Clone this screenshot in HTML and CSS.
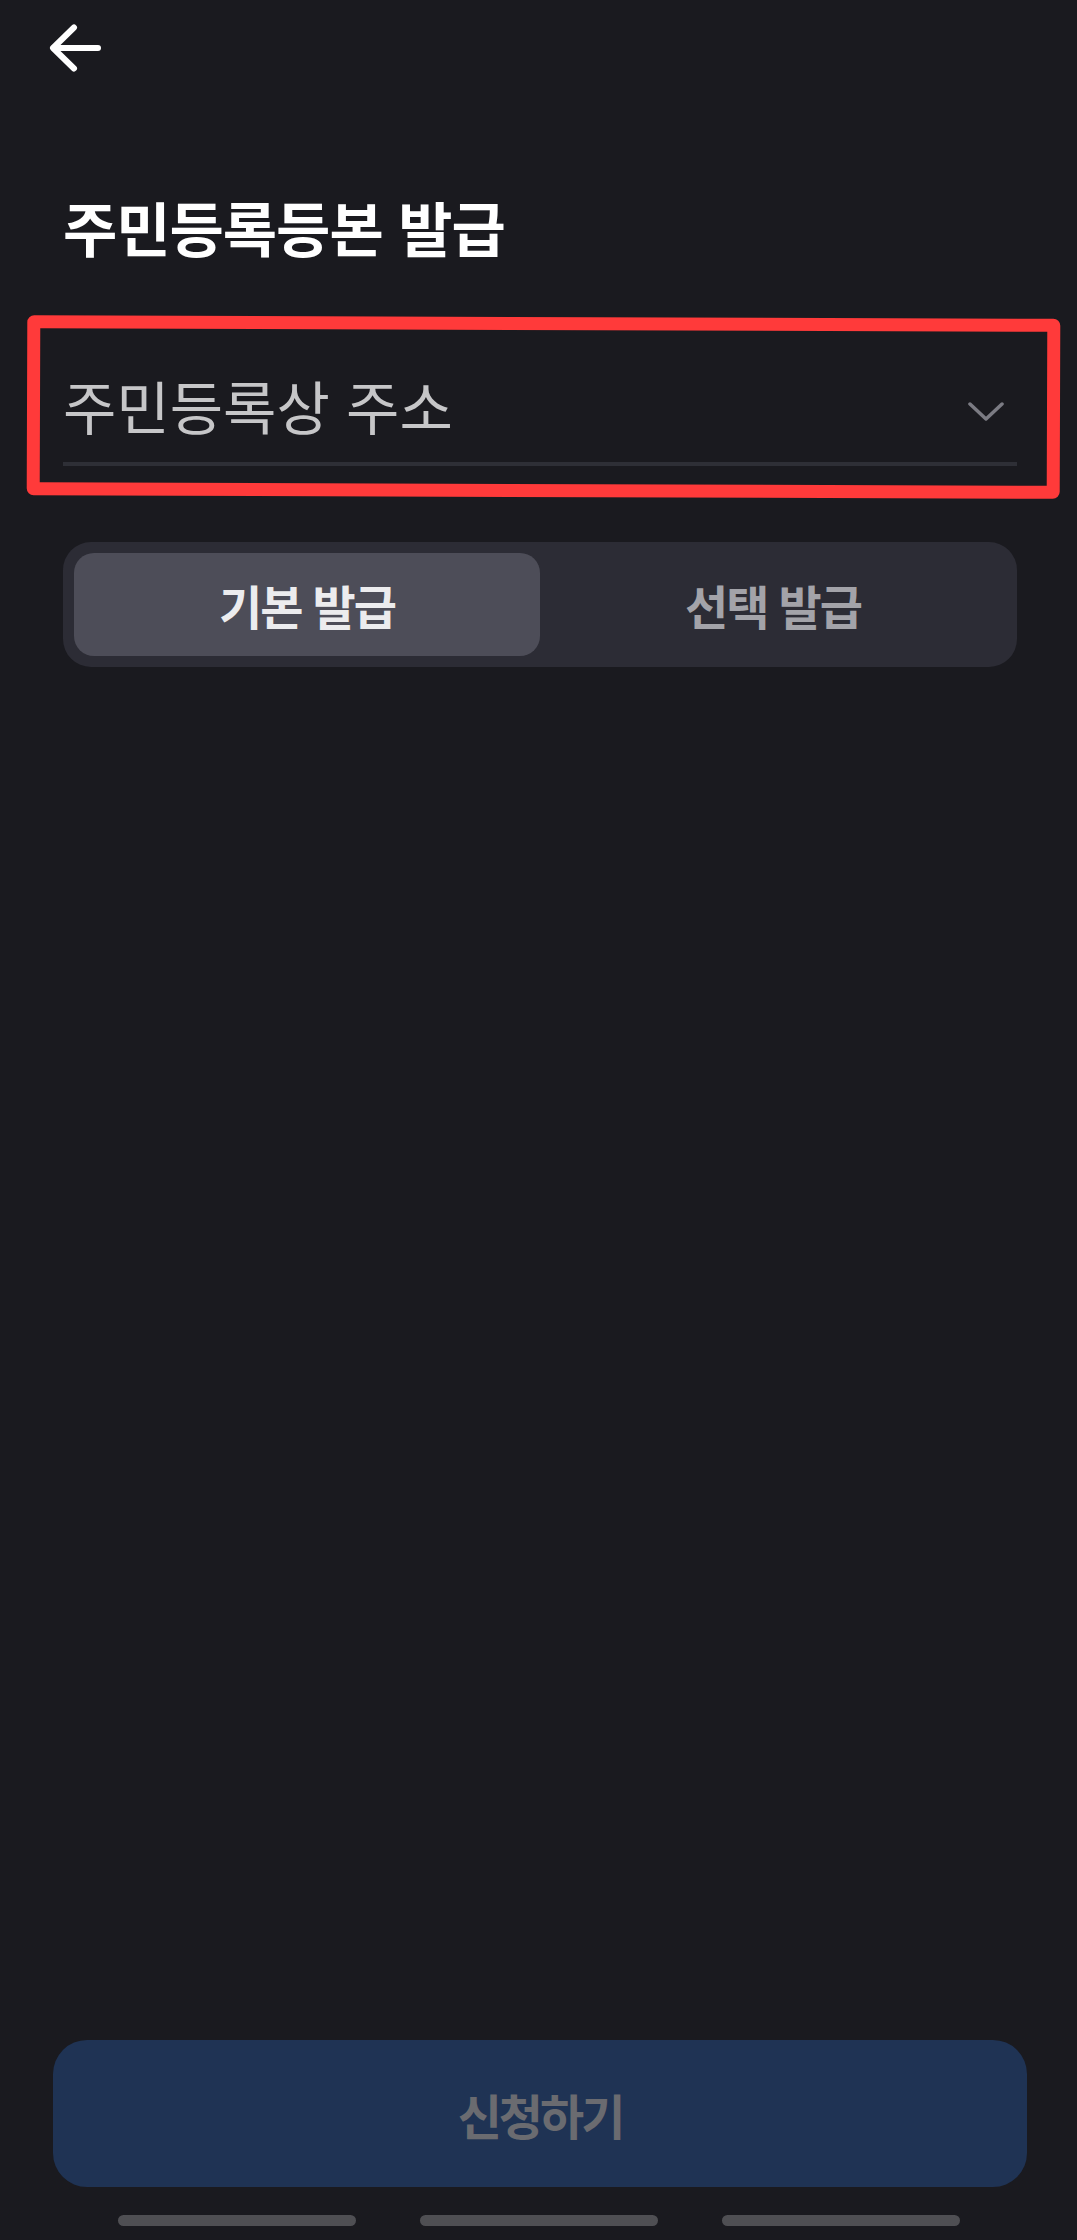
FILE: index.html
```html
<!DOCTYPE html>
<html lang="ko">
<head>
<meta charset="utf-8">
<title>주민등록등본 발급</title>
<link rel="stylesheet" href="styles.css">
</head>
<body>
<div class="screen">
  <header class="topbar">
    <button class="back" aria-label="뒤로">
      <svg width="60" height="56" viewBox="0 0 60 56" fill="none" stroke="#ffffff" stroke-width="6" stroke-linecap="round" stroke-linejoin="round">
        <path d="M52 24 H8"/>
        <path d="M28 3.5 L7 24 L28 44.5"/>
      </svg>
    </button>
  </header>

  <h1 class="title">주민등록등본 발급</h1>

  <div class="field-wrap">
    <div class="field">
      <span class="placeholder">주민등록상 주소</span>
      <svg class="chevron" width="36" height="22" viewBox="0 0 36 22" fill="none" stroke="#7b7b83" stroke-width="3.5" stroke-linecap="round" stroke-linejoin="round">
        <path d="M2 3 L18 18 L34 3"/>
      </svg>
    </div>
    <div class="annotation"></div>
  </div>

  <div class="segmented">
    <button class="seg seg-active">기본 발급</button>
    <button class="seg">선택 발급</button>
  </div>

  <footer class="footer">
    <button class="submit">신청하기</button>
    <nav class="navbar">
      <span class="pill"></span>
      <span class="pill"></span>
      <span class="pill"></span>
    </nav>
  </footer>
</div>
</body>
</html>
```

FILE: styles.css
```css
* { box-sizing: border-box; }

html, body {
  margin: 0;
  padding: 0;
  background: #1a1a1f;
}

body {
  font-family: "Noto Sans CJK KR", "Noto Sans", sans-serif;
  color: #ffffff;
}

.screen {
  width: 1077px;
  height: 2240px;
  display: flex;
  flex-direction: column;
  background: #1a1a1f;
}

.topbar {
  height: 96px;
  display: flex;
  align-items: center;
  padding-left: 46px;
  padding-top: 8px;
}

.back {
  background: none;
  border: 0;
  padding: 0;
  display: flex;
  width: 60px;
  height: 56px;
}

.title {
  margin: 94px 0 0 0;
  padding-left: 63px;
  font-size: 59px;
  font-weight: 700;
  line-height: 74px;
  letter-spacing: -1px;
  color: #ffffff;
}

.field-wrap {
  position: relative;
  margin: 58px 60px 0 63px;
}

.field {
  display: flex;
  align-items: center;
  justify-content: space-between;
  padding-top: 48px;
  padding-bottom: 22px;
  border-bottom: 4px solid #2e2f36;
}

.placeholder {
  font-size: 58px;
  font-weight: 400;
  line-height: 70px;
  color: #c6c6c8;
  letter-spacing: 0;
}

.chevron {
  margin-right: 13px;
  margin-top: 14px;
}

.annotation {
  position: absolute;
  left: -36px;
  right: -43px;
  top: -5px;
  bottom: -31px;
  border: 13px solid #ff3a3a;
  border-radius: 7px;
  pointer-events: none;
  transform: rotate(0.2deg);
}

.segmented {
  margin: 76px 60px 0 63px;
  display: flex;
  padding: 11px;
  background: #2c2c35;
  border-radius: 28px;
  height: 125px;
}

.seg {
  flex: 1;
  border: 0;
  background: transparent;
  border-radius: 20px;
  font-family: "Noto Sans CJK KR", "Noto Sans", sans-serif;
  font-size: 47px;
  font-weight: 700;
  letter-spacing: -2px;
  color: #a3a3a9;
  padding: 0;
}

.seg-active {
  background: #4d4d58;
  color: #ececee;
}

.footer {
  margin-top: auto;
  padding: 0 50px 14px 53px;
  display: flex;
  flex-direction: column;
  align-items: stretch;
}

.submit {
  height: 147px;
  border: 0;
  border-radius: 34px;
  background: #1f3354;
  color: #6a6b70;
  font-family: "Noto Sans CJK KR", "Noto Sans", sans-serif;
  font-size: 48px;
  font-weight: 700;
  letter-spacing: -3px;
}

.navbar {
  margin-top: 28px;
  display: flex;
  justify-content: center;
  gap: 64px;
  padding-right: 3px;
}

.pill {
  width: 238px;
  height: 11px;
  border-radius: 6px;
  background: #4f4f53;
}
```
